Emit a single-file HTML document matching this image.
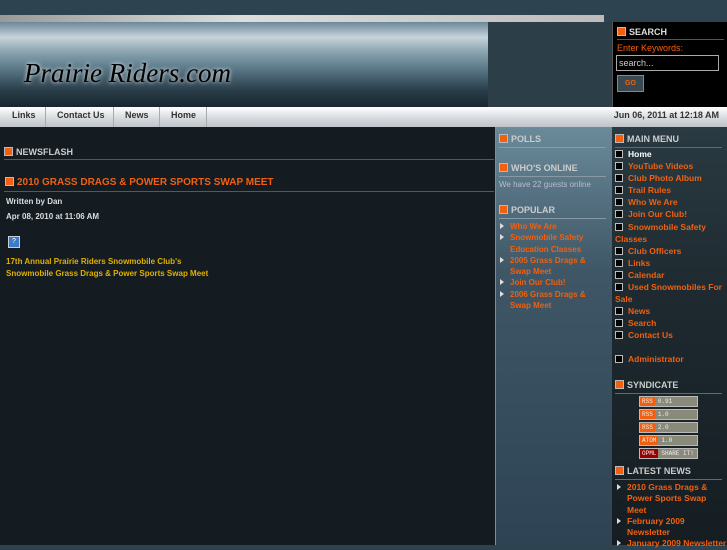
<!DOCTYPE html>
<html><head><style>
body{margin:0;width:727px;height:545px;overflow:hidden;background:#2e4350;font-family:"Liberation Sans",sans-serif;font-size:9px;position:relative}
.a{position:absolute}
.ic{display:inline-block;width:7px;height:7px;background:#f06010;border:1px solid #bbb;vertical-align:-1px;margin-right:3px}
.h{color:#ccc;font-weight:bold;font-size:9px}
.o{color:#f06010;font-weight:bold}
.sq{display:inline-block;width:6px;height:6px;background:#000;border:1px solid #bbb;margin-right:5px;vertical-align:-1px}
.mm div{line-height:12.1px}
.tri{display:inline-block;width:0;height:0;border-left:4px solid #ddd;border-top:3px solid transparent;border-bottom:3px solid transparent;margin-right:6px}
.bd{width:57px;height:9px;border:1px solid #bbb;background:#8a8a7a;margin-bottom:2px;font-size:6px;color:#eee;line-height:9px;font-family:"Liberation Mono",monospace}
.bd span{display:inline-block;background:#f06010;padding:0 2px;margin-right:3px}
</style></head><body>
<div class="a" style="left:0;top:15px;width:604px;height:7px;background:linear-gradient(90deg,#999,#ddd 40%,#bbb)"></div>
<div class="a" style="left:0;top:22px;width:488px;height:85px;background:linear-gradient(180deg,#6a8898 0%,#c8d4da 18%,#8aa4b0 35%,#5a7888 55%,#2a3e4a 80%,#18262e 100%)"></div>
<div class="a" style="left:24px;top:58px;font-family:'Liberation Serif',serif;font-style:italic;font-size:27px;color:#000;text-shadow:0 0 4px #fff">Prairie Riders.com</div>
<div class="a" style="left:488px;top:22px;width:124px;height:85px;background:#2c3e48"></div>
<div class="a" style="left:612px;top:22px;width:115px;height:85px;background:#000;border-left:1px solid #555"></div>
<div class="a" style="left:617px;top:27px"><span class="ic"></span><span class="h" style="color:#ddd">SEARCH</span></div>
<div class="a" style="left:617px;top:39px;width:107px;border-top:1px solid #555"></div>
<div class="a o" style="left:617px;top:43px;font-weight:normal">Enter Keywords:</div>
<div class="a" style="left:616px;top:55px;width:99px;height:14px;border:1px solid #aaa;color:#ccc;line-height:14px;padding-left:2px">search...</div>
<div class="a" style="left:617px;top:75px;width:25px;height:15px;background:#3a4a52;border:1px solid #888;color:#f06010;font-size:7px;text-align:center;line-height:15px;font-weight:bold">GO</div>
<div class="a" style="left:0;top:107px;width:727px;height:20px;background:linear-gradient(#fff,#d4d8dc 60%,#bfc4c8);color:#333;font-weight:bold;line-height:17px">
<span class="a" style="left:12px">Links</span><span class="a" style="left:45px;top:0;height:20px;border-left:1px solid #aaa"></span>
<span class="a" style="left:57px">Contact Us</span><span class="a" style="left:113px;height:20px;border-left:1px solid #aaa"></span>
<span class="a" style="left:125px">News</span><span class="a" style="left:159px;height:20px;border-left:1px solid #aaa"></span>
<span class="a" style="left:171px">Home</span><span class="a" style="left:206px;height:20px;border-left:1px solid #aaa"></span>
<span class="a" style="right:8px">Jun 06, 2011 at 12:18 AM</span></div>
<div class="a" style="left:0;top:127px;width:495px;height:418px;background:#141c22"></div>
<div class="a" style="left:495px;top:127px;width:116px;height:418px;background:linear-gradient(#6a8a9a,#3e5666 35%,#2e4454);border-left:1px solid #889;border-right:1px solid #889"></div>
<div class="a" style="left:612px;top:127px;width:115px;height:418px;background:linear-gradient(#2a3a42,#1e2a30 40%,#151d22)"></div>
<div class="a" style="left:4px;top:147px"><span class="ic"></span><span class="h">NEWSFLASH</span></div>
<div class="a" style="left:4px;top:159px;width:490px;border-top:1px solid #556"></div>
<div class="a" style="left:5px;top:177px;font-size:10px"><span class="ic"></span><span class="o">2010 GRASS DRAGS &amp; POWER SPORTS SWAP MEET</span></div>
<div class="a" style="left:4px;top:191px;width:490px;border-top:1px solid #556"></div>
<div class="a" style="left:6px;top:197px;color:#ddd;font-weight:bold;font-size:8px">Written by Dan</div>
<div class="a" style="left:6px;top:212px;color:#ddd;font-weight:bold;font-size:8px">Apr 08, 2010 at 11:06 AM</div>
<div class="a" style="left:8px;top:236px;width:10px;height:10px;background:#3a7cc8;border:1px solid #ccd;color:#fff;font-size:7px;text-align:center;line-height:10px">?</div>
<div class="a" style="left:6px;top:256px;color:#e0b000;font-weight:bold;font-size:8px;line-height:12px">17th Annual Prairie Riders Snowmobile Club's<br>Snowmobile Grass Drags &amp; Power Sports Swap Meet</div>
<div class="a" style="left:499px;top:134px"><span class="ic"></span><span class="h">POLLS</span></div>
<div class="a" style="left:499px;top:147px;width:107px;border-top:1px solid #8899a4"></div>
<div class="a" style="left:499px;top:163px"><span class="ic"></span><span class="h">WHO'S ONLINE</span></div>
<div class="a" style="left:499px;top:176px;width:107px;border-top:1px solid #8899a4"></div>
<div class="a" style="left:499px;top:180px;color:#bbc;font-size:8px">We have 22 guests online</div>
<div class="a" style="left:499px;top:205px"><span class="ic"></span><span class="h">POPULAR</span></div>
<div class="a" style="left:499px;top:218px;width:107px;border-top:1px solid #8899a4"></div>
<div class="a o" style="left:500px;top:221px;font-size:8px;line-height:11.3px">
<div><span class="tri"></span>Who We Are</div><div><span class="tri"></span>Snowmobile Safety</div><div style="padding-left:10px">Education Classes</div><div><span class="tri"></span>2005 Grass Drags &amp;</div><div style="padding-left:10px">Swap Meet</div><div><span class="tri"></span>Join Our Club!</div><div><span class="tri"></span>2006 Grass Drags &amp;</div><div style="padding-left:10px">Swap Meet</div></div>
<div class="a" style="left:615px;top:134px"><span class="ic"></span><span class="h">MAIN MENU</span></div>
<div class="a" style="left:615px;top:147px;width:107px;border-top:1px solid #667"></div>
<div class="a o mm" style="left:615px;top:148px;width:110px;font-size:8.5px">
<div><span class="sq"></span><span style="color:#fff">Home</span></div><div><span class="sq"></span>YouTube Videos</div><div><span class="sq"></span>Club Photo Album</div><div><span class="sq"></span>Trail Rules</div><div><span class="sq"></span>Who We Are</div><div><span class="sq"></span>Join Our Club!</div><div><span class="sq"></span>Snowmobile Safety Classes</div><div><span class="sq"></span>Club Officers</div><div><span class="sq"></span>Links</div><div><span class="sq"></span>Calendar</div><div><span class="sq"></span>Used Snowmobiles For Sale</div><div><span class="sq"></span>News</div><div><span class="sq"></span>Search</div><div><span class="sq"></span>Contact Us</div><div style="margin-top:11px"><span class="sq"></span>Administrator</div></div>
<div class="a" style="left:615px;top:380px"><span class="ic"></span><span class="h">SYNDICATE</span></div>
<div class="a" style="left:615px;top:393px;width:107px;border-top:1px solid #667"></div>
<div class="a" style="left:639px;top:396px">
<div class="bd"><span>RSS</span>0.91</div><div class="bd"><span>RSS</span>1.0</div><div class="bd"><span>RSS</span>2.0</div><div class="bd"><span>ATOM</span>1.0</div><div class="bd"><span style="background:#900">OPML</span>SHARE IT!</div></div>
<div class="a" style="left:615px;top:466px"><span class="ic"></span><span class="h">LATEST NEWS</span></div>
<div class="a" style="left:615px;top:479px;width:107px;border-top:1px solid #667"></div>
<div class="a o" style="left:617px;top:482px;font-size:8.5px;line-height:11.3px;width:110px">
<div><span class="tri"></span>2010 Grass Drags &amp;</div><div style="padding-left:10px">Power Sports Swap</div><div style="padding-left:10px">Meet</div><div><span class="tri"></span>February 2009</div><div style="padding-left:10px">Newsletter</div><div><span class="tri"></span>January 2009 Newsletter</div></div>
</body></html>
